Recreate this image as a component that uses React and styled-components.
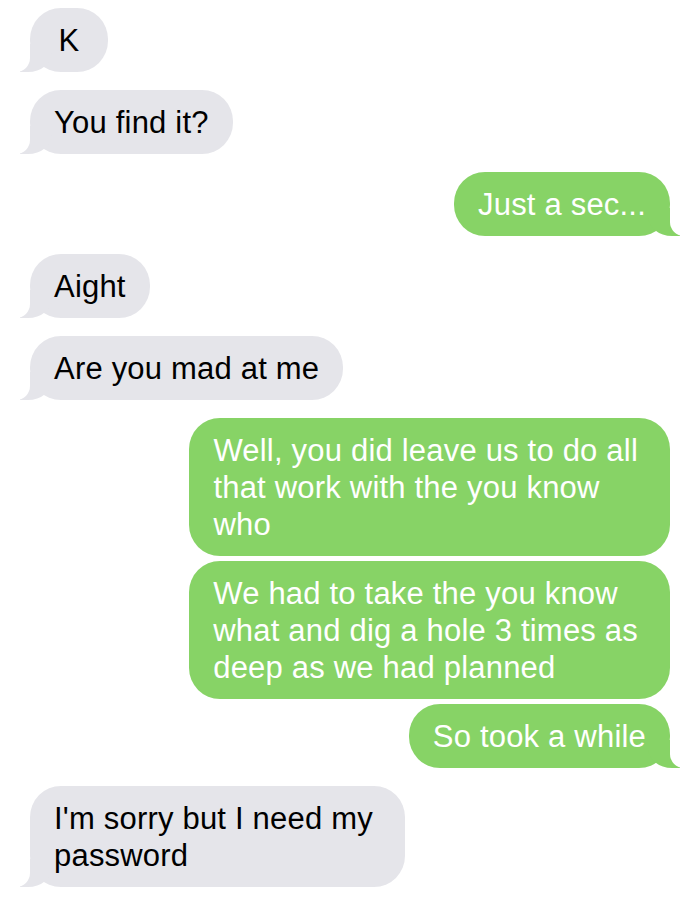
import React from "react";
import styled, { createGlobalStyle, css } from "styled-components";

const GlobalStyle = createGlobalStyle`
  html, body {
    margin: 0;
    padding: 0;
    background: #ffffff;
  }
  body {
    font-family: "Liberation Sans", Arial, Helvetica, sans-serif;
    -webkit-font-smoothing: antialiased;
  }
`;

const GRAY = "#e5e5ea";
const GREEN = "#87d366";

const Thread = styled.div`
  display: flex;
  flex-direction: column;
  padding: 8px 30px 0 30px;
  width: 700px;
  box-sizing: border-box;
`;

const Bubble = styled.div`
  position: relative;
  display: flex;
  justify-content: center;
  min-width: 78px;
  box-sizing: border-box;
  padding: 13.5px 24px;
  padding-right: ${({ $multi }) => ($multi ? "32px" : "24px")};
  border-radius: 31px;
  font-size: 31px;
  line-height: 37px;
  letter-spacing: 0.2px;
  margin-bottom: ${({ $tail }) => ($tail ? "18px" : "5px")};
  align-self: ${({ $me }) => ($me ? "flex-end" : "flex-start")};
  background: ${({ $me }) => ($me ? GREEN : GRAY)};
  color: ${({ $me }) => ($me ? "#ffffff" : "#000000")};

  ${({ $tail, $me }) =>
    $tail &&
    ($me
      ? css`
          &::before {
            content: "";
            position: absolute;
            bottom: 0;
            right: -10px;
            width: 32px;
            height: 28px;
            background: ${GREEN};
            border-bottom-left-radius: 24px 20px;
          }
          &::after {
            content: "";
            position: absolute;
            bottom: 0;
            right: -30px;
            width: 30px;
            height: 30px;
            background: #ffffff;
            border-bottom-left-radius: 14px;
          }
        `
      : css`
          &::before {
            content: "";
            position: absolute;
            bottom: 0;
            left: -10px;
            width: 32px;
            height: 28px;
            background: ${GRAY};
            border-bottom-right-radius: 24px 20px;
          }
          &::after {
            content: "";
            position: absolute;
            bottom: 0;
            left: -30px;
            width: 30px;
            height: 30px;
            background: #ffffff;
            border-bottom-right-radius: 14px;
          }
        `)}
`;

const Text = styled.span`
  position: relative;
  z-index: 1;
  white-space: nowrap;
`;

const messages = [
  { me: false, tail: true, lines: ["K"] },
  { me: false, tail: true, lines: ["You find it?"] },
  { me: true, tail: true, lines: ["Just a sec..."] },
  { me: false, tail: true, lines: ["Aight"] },
  { me: false, tail: true, lines: ["Are you mad at me"] },
  {
    me: true,
    tail: false,
    lines: ["Well, you did leave us to do all", "that work with the you know", "who"],
  },
  {
    me: true,
    tail: false,
    lines: ["We had to take the you know", "what and dig a hole 3 times as", "deep as we had planned"],
  },
  { me: true, tail: true, lines: ["So took a while"] },
  { me: false, tail: true, lines: ["I'm sorry but I need my", "password"] },
];

const App = () => {
  return (
    <>
      <GlobalStyle />
      <Thread>
        {messages.map((m, i) => (
          <Bubble key={i} $me={m.me} $tail={m.tail} $multi={m.lines.length > 1}>
            <Text>
              {m.lines.map((line, j) => (
                <React.Fragment key={j}>
                  {j > 0 && <br />}
                  {line}
                </React.Fragment>
              ))}
            </Text>
          </Bubble>
        ))}
      </Thread>
    </>
  );
};

export default App;
